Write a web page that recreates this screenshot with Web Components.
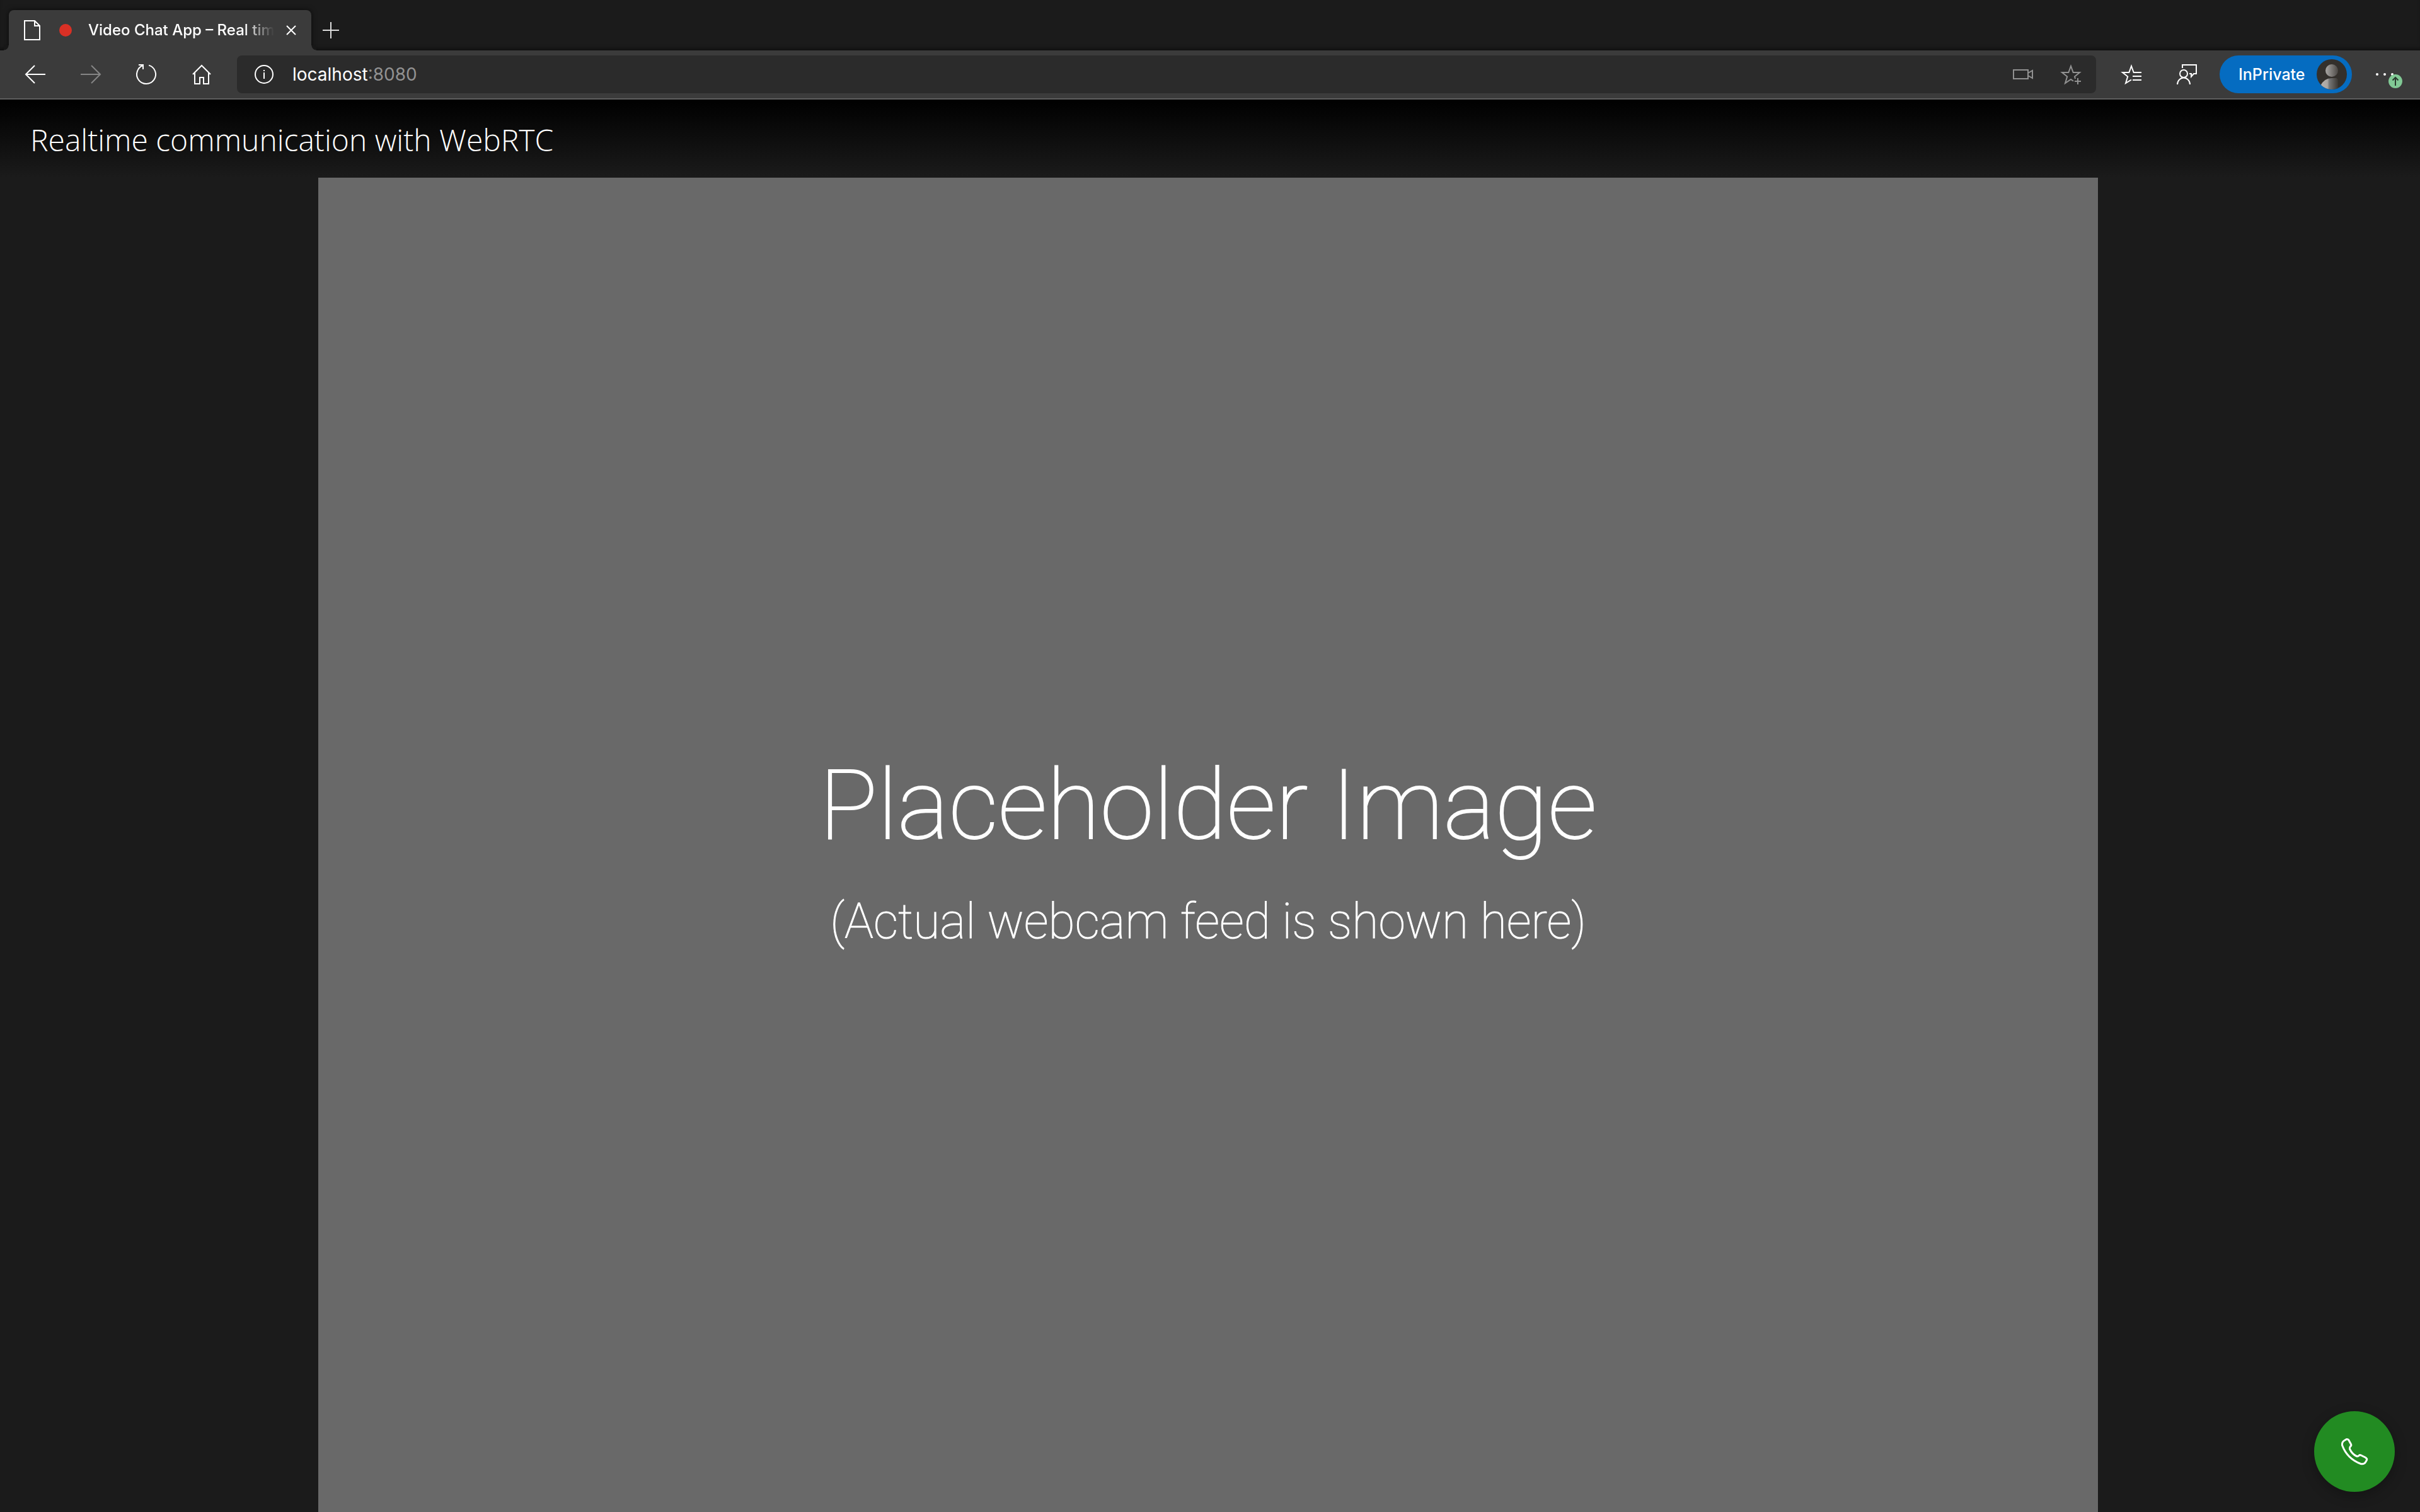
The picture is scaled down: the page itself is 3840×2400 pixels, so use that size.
<!DOCTYPE html>
<html lang="en">
<head>
<meta charset="utf-8">
<title>Video Chat App – Real time communication</title>
<style>
  html, body { height: 100%; margin: 0; background: #1b1b1b; }
  body { font-family: Inter, "Liberation Sans", sans-serif; color: #fff; }
</style>
</head>
<body>
<browser-window></browser-window>

<script>
const ICONS = {
  page: '<path d="M1 1h16l8 8v22H1z"/><path d="M17 1v8h8"/>',
  close: '<path d="M1 1l14 14M15 1L1 15"/>',
  plus: '<path d="M13 0v26M0 13h26"/>',
  back: '<path d="M32 15H1M15 1L1 15l14 14"/>',
  forward: '<path d="M0 15h31M17 1l14 14-14 14"/>',
  reload: '<path d="M20.2 1.6A15 15 0 1 1 11.5 1.7M4 1h7v7"/>',
  home: '<path d="M2 16L16 2l14 14M5 13v18h8V21h6v10h8V13"/>',
  info: '<circle cx="15" cy="15" r="14"/><path d="M15 12v10M15 8v2"/>',
  camera: '<path d="M1 9h23v14H1zM24 14l7-4v12l-7-4"/>',
  starPlus: '<path d="M23 23L22 19.500L30 13H19.700L16 3l-3.700 10H2l8.200 6.500L7 30l9-6 4 2.800M27 22v10M22 27h10"/>',
  starList: '<path d="M32 13H19.700L16 3l-3.700 10H2l8.200 6.500L7 30l9-5.500M18 19h14M18 25h14"/>',
  feedback: '<path d="M9 6V1h22v14h-4l-4 4.500V15h-3"/><circle cx="11" cy="15" r="6"/><path d="M1 32a10 10.500 0 0 1 20 0"/>',
  phone: '<path d="M5 3.500L8.500 1.500Q10.500 1 12 3L15.500 9.500Q16.500 11.500 14.500 13Q13 14.500 13.500 17Q17.500 25.500 24.500 28.500Q26.500 29 28 27.500Q29.500 26 31.500 27L38.500 30.500Q41.500 32.500 40.500 34.500L38.500 38Q36.500 41.500 31 40.500Q9.500 32.500 1.500 11Q.8 6 5 3.500z"/>'
};
const icon = (name, w, h, stroke = 2) =>
  `<svg width="${w}" height="${h}" viewBox="0 0 ${w} ${h}" fill="none" stroke="currentColor" stroke-width="${stroke}" aria-hidden="true">${ICONS[name]}</svg>`;

const RESET = `
  *, *::before, *::after { box-sizing: border-box; }
  svg { display: block; flex: none; overflow: visible; }
  button { font: inherit; color: inherit; background: none; border: 0; padding: 0; margin: 0; cursor: pointer; }
`;
function define(name, css, html) {
  const template = document.createElement('template');
  template.innerHTML = `<style>${RESET}${css}</style>${html}`;
  customElements.define(name, class extends HTMLElement {
    constructor() {
      super();
      this.attachShadow({ mode: 'open' }).append(template.content.cloneNode(true));
    }
  });
}

customElements.define('icon-button', class extends HTMLElement {
  connectedCallback() {
    if (this.shadowRoot) return;
    const w = this.getAttribute('w') || 32, h = this.getAttribute('h') || 32;
    this.attachShadow({ mode: 'open' }).innerHTML = `
      <style>${RESET}
        :host { display: flex; flex: none; }
        button { flex: 1; display: flex; align-items: center; justify-content: center; }
      </style>
      <button type="button" aria-label="${this.getAttribute('label')}">${icon(this.getAttribute('icon'), w, h)}</button>`;
  }
});

define('browser-tab', `
  :host { display: flex; align-items: center; position: relative; width: 480px; height: 64px;
    padding: 0 24px; background: #3b3b3b; border-radius: 8px 8px 0 0; box-shadow: 0 0 8px #000a; }
  :host::before, :host::after { content: ""; position: absolute; bottom: 0; width: 8px; height: 8px; }
  :host::before { right: 100%; background: radial-gradient(circle at 0 0, #171717 7px, #3b3b3b 8px); }
  :host::after { left: 100%; background: radial-gradient(circle at 100% 0, #171717 7px, #3b3b3b 8px); }
  .rec { flex: none; width: 20px; height: 20px; margin: 0 26px 0 30px; border-radius: 50%; background: #d93025; }
  .title { flex: 1; min-width: 0; overflow: hidden; white-space: nowrap; font-size: 24px; line-height: 32px; font-weight: 500;
    margin-right: 19px; -webkit-mask-image: linear-gradient(90deg, #000 calc(100% - 48px), transparent);
    mask-image: linear-gradient(90deg, #000 calc(100% - 48px), transparent); }
`, `${icon('page', 26, 32)}<span class="rec"></span><span class="title"><slot></slot></span>
    <icon-button icon="close" w="16" h="16" label="Close tab"></icon-button>`);

define('tab-strip', `
  :host { display: flex; align-items: flex-end; height: 80px; padding-left: 14px; background: #1b1b1b; overflow: hidden;
    box-shadow: inset 0 -6px 6px -4px #0008; }
  .new { height: 64px; margin-left: 18px; color: #ddd; }
`, `<browser-tab>Video Chat App – Real time communication</browser-tab>
    <icon-button class="new" icon="plus" w="26" h="26" label="New tab"></icon-button>`);

define('address-bar', `
  :host { display: flex; align-items: center; flex: 1; height: 60px; margin: 0 12px; padding: 0 24px 0 28px;
    background: #2b2b2b; border-radius: 8px; }
  label { flex: 1; display: flex; align-items: center; margin-left: 30px; font-size: 28px; line-height: 36px; color: #919191; }
  input { field-sizing: content; font: inherit; line-height: 36px; height: 36px; color: #fff; background: none; border: 0; padding: 0; outline: 0; }
  .actions { display: flex; gap: 44px; color: #919191; }
`, `<icon-button icon="info" w="30" h="30" label="Site information"></icon-button>
    <label><input type="text" value="localhost" aria-label="Address" spellcheck="false"><span>:8080</span></label>
    <div class="actions">
      <icon-button icon="camera" label="Camera in use"></icon-button>
      <icon-button icon="starPlus" label="Add to favorites"></icon-button>
    </div>`);

define('profile-pill', `
  :host { display: flex; margin: 0 8px; }
  button { display: flex; align-items: center; justify-content: space-between; width: 210px; height: 60px;
    padding: 0 8px 0 30px; border-radius: 30px; background: #056cc1; font-size: 25px; line-height: 32px; font-weight: 500; }
`, `<button type="button"><slot></slot>
      <svg width="48" height="48" viewBox="0 0 48 48" aria-hidden="true">
        <defs>
          <linearGradient id="head"><stop offset="0" stop-color="#aaa8a5"/><stop offset="1" stop-color="#4b4845"/></linearGradient>
          <linearGradient id="body"><stop offset="0" stop-color="#b8b2ae"/><stop offset=".4" stop-color="#aaa6a2"/><stop offset=".5" stop-color="#777"/><stop offset="1" stop-color="#3b3834"/></linearGradient>
          <clipPath id="disc"><circle cx="24" cy="24" r="24"/></clipPath>
        </defs>
        <g clip-path="url(#disc)">
          <rect width="48" height="48" fill="#33302c"/>
          <circle cx="24" cy="18" r="10" fill="url(#head)"/>
          <path d="M6 42Q12 30 24 30h6q4 0 4 4v14H6z" fill="url(#body)"/>
        </g>
      </svg></button>`);

define('more-menu', `
  :host { display: flex; width: 88px; }
  button { flex: 1; display: flex; align-items: center; justify-content: center; }
`, `<button type="button" aria-label="Settings and more">
      <svg width="32" height="32" viewBox="0 0 32 32" aria-hidden="true">
        <g fill="#fff"><circle cx="4" cy="16" r="2"/><circle cx="16" cy="16" r="2"/><circle cx="28" cy="16" r="2"/></g>
        <circle cx="33" cy="27" r="11" fill="#81c995"/>
        <path d="M33 34V21M28.500 25.500L33 21l4.500 4.500" fill="none" stroke="#2b3b30" stroke-width="2"/>
      </svg></button>`);

define('browser-toolbar', `
  :host { display: flex; align-items: center; height: 78px; padding: 0 12px; background: #3b3b3b; border-bottom: 2px solid #5f5f5f; }
  nav, .tools { display: flex; }
  icon-button { width: 88px; height: 60px; }
  .off { color: #858585; }
`, `<nav aria-label="Browser">
      <icon-button icon="back" h="30" label="Back"></icon-button>
      <icon-button class="off" icon="forward" h="30" label="Forward"></icon-button>
      <icon-button icon="reload" label="Reload"></icon-button>
      <icon-button icon="home" label="Home"></icon-button>
    </nav>
    <address-bar></address-bar>
    <div class="tools">
      <icon-button icon="starList" label="Favorites"></icon-button>
      <icon-button icon="feedback" label="Send feedback"></icon-button>
    </div>
    <profile-pill>InPrivate</profile-pill>
    <more-menu></more-menu>`);

define('app-header', `
  :host { display: block; padding: 32px 48px 28px; background: linear-gradient(#000, #1b1b1b); }
  h1 { margin: 0; font: 300 48px/64px "Open Sans", "Noto Sans", sans-serif; }
`, `<h1><slot></slot></h1>`);

define('video-stage', `
  :host { display: flex; justify-content: center; flex: 1; min-height: 0; }
  figure { margin: 0 6px 0 0; height: 100%; aspect-ratio: 4 / 3; background: #696969; display: flex; flex-direction: column;
    align-items: center; justify-content: center; gap: 40px; padding-top: 12px; text-align: center; white-space: nowrap; }
  .big { font: 100 154px/192px Roboto, sans-serif; -webkit-text-stroke: 2px #fff; }
  .small { font: 100 77px/96px Roboto, sans-serif; -webkit-text-stroke: 1px #fff; }
`, `<figure><span class="big"><slot name="title"></slot></span><span class="small"><slot name="note"></slot></span></figure>`);

define('call-button', `
  :host { display: block; position: fixed; right: 40px; bottom: 32px; }
  button { display: flex; align-items: center; justify-content: center; width: 128px; height: 128px; border-radius: 50%;
    background: #228b22; box-shadow: 0 6px 20px #0004; }
`, `<button type="button" aria-label="Call">${icon('phone', 42, 42, 3)}</button>`);

define('browser-window', `
  :host { display: flex; flex-direction: column; height: 100vh; overflow: hidden; background: #1b1b1b; }
`, `<tab-strip></tab-strip>
    <browser-toolbar></browser-toolbar>
    <app-header>Realtime communication with WebRTC</app-header>
    <video-stage><span slot="title">Placeholder Image</span><span slot="note">(Actual webcam feed is shown here)</span></video-stage>
    <call-button></call-button>`);
</script>
</body>
</html>
